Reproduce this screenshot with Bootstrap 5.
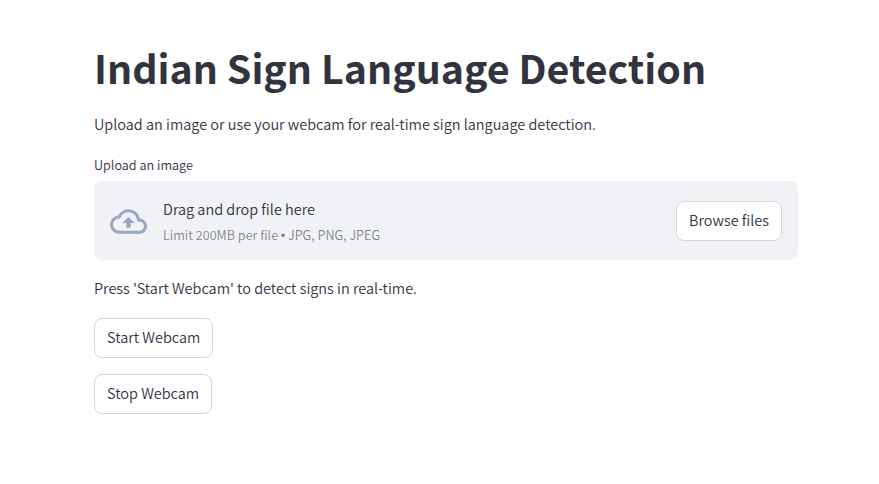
<!DOCTYPE html>
<html lang="en">
<head>
<meta charset="utf-8">
<meta name="viewport" content="width=device-width, initial-scale=1">
<title>Indian Sign Language Detection</title>
<link href="https://cdn.jsdelivr.net/npm/bootstrap@5.3.0/dist/css/bootstrap.min.css" rel="stylesheet">
<style>
body { font-family: "Source Sans Pro", "Noto Sans CJK SC", sans-serif; font-weight: 350; color: #31333f; font-size: 14.48px; line-height: 26px; }
.app-main { width: 704px; margin-left: 94px; padding-top: 40px; }
.app-title { font-size: 39.35px; font-weight: 700; line-height: 53px; color: #31333f; margin-bottom: 18px; }
.intro { margin-bottom: 17px; }
.field-label { font-size: 12.67px; line-height: 21px; margin-bottom: 6px; }
.dropzone { background: #f0f2f6; border-radius: 8px; height: 79px; margin-bottom: 15px; }
.drop-text { gap: 3px; padding-top: 1px; }
.drop-hint { font-size: 12.67px; line-height: 20px; color: rgba(49, 51, 63, .6); }
.hint-dot { font-family: "Liberation Sans", sans-serif; margin: 0 .1px 0 -.3px; }
.drop-icon { color: #98a6c7; margin-top: 2px; }
.webcam-note { margin-bottom: 17px; }
.btn-app { --bs-btn-font-size: 14.48px; --bs-btn-font-weight: 350; --bs-btn-line-height: 26px; --bs-btn-padding-x: 12px; --bs-btn-color: #31333f; --bs-btn-bg: #fff; --bs-btn-border-color: #d6d6d9; --bs-btn-border-radius: 8px; --bs-btn-hover-color: #ff4b4b; --bs-btn-hover-border-color: #ff4b4b; height: 40px; white-space: nowrap; padding-top: 5px; padding-bottom: 7px; }
</style>
</head>
<body class="bg-white">
<main class="app-main">
  <h1 class="app-title text-nowrap">Indian Sign Language Detection</h1>
  <p class="intro">Upload an image or use your webcam for real-time sign language detection.</p>
  <label class="field-label d-block">Upload an image</label>
  <section class="dropzone d-flex align-items-center px-3">
    <svg class="drop-icon flex-shrink-0 me-3" width="37" height="37" viewBox="0 0 24 24" fill="currentColor" aria-hidden="true"><path d="M19.35 10.04A7.49 7.49 0 0012 4C9.11 4 6.6 5.64 5.35 8.04A5.994 5.994 0 000 14c0 3.31 2.69 6 6 6h13c2.76 0 5-2.24 5-5 0-2.64-2.05-4.78-4.65-4.96zM19 18H6c-2.21 0-4-1.79-4-4 0-2.05 1.53-3.76 3.56-3.97l1.07-.11.5-.95A5.469 5.469 0 0112 6c2.62 0 4.88 1.86 5.39 4.43l.3 1.5 1.53.11A2.98 2.98 0 0122 15c0 1.65-1.35 3-3 3zM8 13h2.55v3h2.9v-3H16l-4-4-4 4z"/></svg>
    <div class="drop-text d-flex flex-column me-auto">
      <span>Drag and drop file here</span>
      <small class="drop-hint">Limit 200MB per file <span class="hint-dot">•</span> JPG, PNG, JPEG</small>
    </div>
    <button type="button" class="btn btn-app">Browse files</button>
  </section>
  <p class="webcam-note">Press 'Start Webcam' to detect signs in real-time.</p>
  <div class="d-flex flex-column align-items-start gap-3">
    <button type="button" class="btn btn-app">Start Webcam</button>
    <button type="button" class="btn btn-app">Stop Webcam</button>
  </div>
</main>
<script src="https://cdn.jsdelivr.net/npm/bootstrap@5.3.0/dist/js/bootstrap.bundle.min.js"></script>
</body>
</html>
